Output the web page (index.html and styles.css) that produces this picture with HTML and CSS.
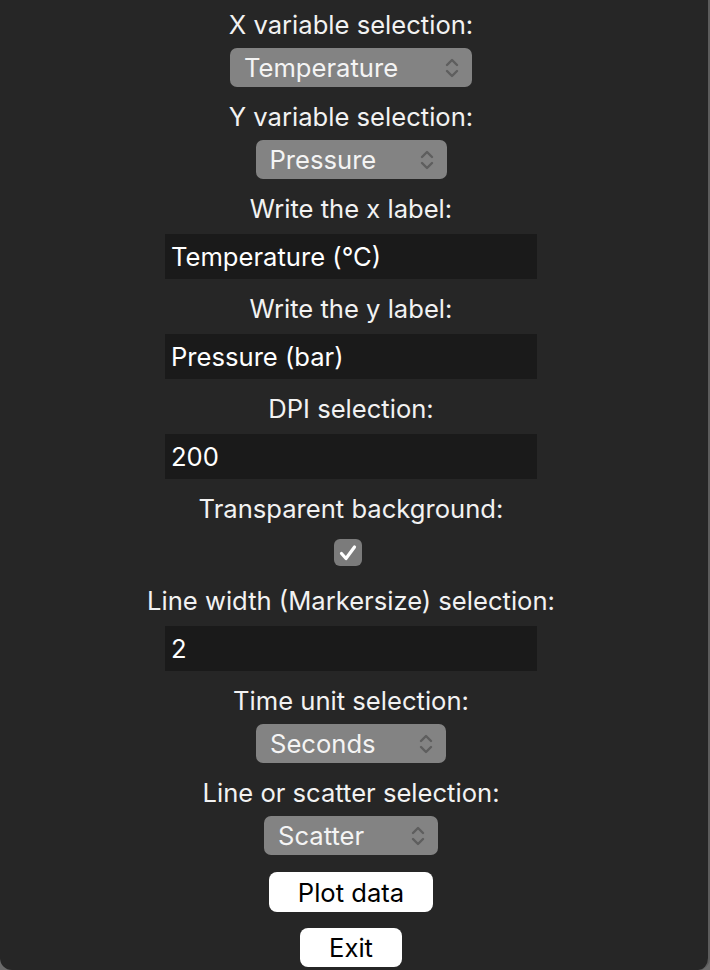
FILE: index.html
```html
<!DOCTYPE html>
<html lang="en">
<head>
<meta charset="utf-8">
<title>Plot settings</title>
<link rel="stylesheet" href="styles.css">
</head>
<body>
<div class="window">
  <div class="form">
    <label class="caption first">X variable selection:</label>
    <div class="select sel-x"><span>Temperature</span><svg class="chev" viewBox="0 0 14 22" width="14" height="22"><path d="M2 8 L7 3 L12 8 M2 14 L7 19 L12 14"/></svg></div>

    <label class="caption">Y variable selection:</label>
    <div class="select sel-y"><span>Pressure</span><svg class="chev" viewBox="0 0 14 22" width="14" height="22"><path d="M2 8 L7 3 L12 8 M2 14 L7 19 L12 14"/></svg></div>

    <label class="caption">Write the x label:</label>
    <div class="entry">Temperature (°C)</div>

    <label class="caption">Write the y label:</label>
    <div class="entry">Pressure (bar)</div>

    <label class="caption">DPI selection:</label>
    <div class="entry">200</div>

    <label class="caption">Transparent background:</label>
    <div class="check"><svg viewBox="0 0 28 28" width="28" height="28"><path d="M7.5 14.5 L12 19.5 L20.5 8"/></svg></div>

    <label class="caption after-check">Line width (Markersize) selection:</label>
    <div class="entry">2</div>

    <label class="caption">Time unit selection:</label>
    <div class="select sel-time"><span>Seconds</span><svg class="chev" viewBox="0 0 14 22" width="14" height="22"><path d="M2 8 L7 3 L12 8 M2 14 L7 19 L12 14"/></svg></div>

    <label class="caption">Line or scatter selection:</label>
    <div class="select sel-kind"><span>Scatter</span><svg class="chev" viewBox="0 0 14 22" width="14" height="22"><path d="M2 8 L7 3 L12 8 M2 14 L7 19 L12 14"/></svg></div>

    <button class="btn btn-plot">Plot data</button>
    <button class="btn btn-exit">Exit</button>
  </div>
</div>
</body>
</html>
```

FILE: styles.css
```css
html, body {
  margin: 0;
  padding: 0;
  height: 100%;
  background: #6a6a6a;
}

body {
  font-family: Inter, "Noto Sans", sans-serif;
  color: #f2f2f2;
}

.window {
  box-sizing: border-box;
  width: 710px;
  height: 970px;
  background: #262626;
  border-right: 2px solid #5c5c5c;
  border-radius: 0 0 12px 12px;
  overflow: hidden;
  padding-right: 6px;
}

.form {
  display: flex;
  flex-direction: column;
  align-items: center;
  padding-top: 10px;
}

.caption {
  display: block;
  height: 30px;
  line-height: 30px;
  font-size: 25.6px;
  margin-top: 15px;
  white-space: nowrap;
}

.caption.first {
  margin-top: 0;
}

.caption.after-check {
  margin-top: 20px;
}

.select {
  box-sizing: border-box;
  height: 39px;
  margin-top: 8px;
  background: #838383;
  border-radius: 7px;
  display: flex;
  align-items: center;
  justify-content: space-between;
  padding: 0 13px 0 14px;
  font-size: 25.6px;
  color: #f4f4f4;
}

.chev {
  fill: none;
  stroke: #5e5e5e;
  stroke-width: 2.4;
  stroke-linecap: round;
  stroke-linejoin: round;
}

.sel-x { width: 242px; }
.sel-y { width: 191px; }
.sel-time { width: 190px; }
.sel-kind { width: 174px; }

.entry {
  box-sizing: border-box;
  width: 372px;
  height: 45px;
  margin-top: 10px;
  background: #1a1a1a;
  padding-left: 6px;
  line-height: 45px;
  font-size: 25.6px;
  color: #ffffff;
}

.check {
  width: 28px;
  height: 27px;
  margin-top: 15px;
  margin-right: 7px;
  background: #7b7b7b;
  border-radius: 6px;
  display: flex;
  align-items: center;
  justify-content: center;
}

.check svg {
  fill: none;
  stroke: #ffffff;
  stroke-width: 3.2;
  stroke-linecap: round;
  stroke-linejoin: round;
}

.btn {
  box-sizing: border-box;
  height: 40px;
  background: #ffffff;
  color: #000000;
  border: none;
  border-radius: 8px;
  font-family: Inter, "Noto Sans", sans-serif;
  font-size: 25.6px;
  padding: 0;
}

.btn-plot {
  width: 164px;
  margin-top: 17px;
}

.btn-exit {
  width: 102px;
  margin-top: 16px;
  height: 39px;
}
```
